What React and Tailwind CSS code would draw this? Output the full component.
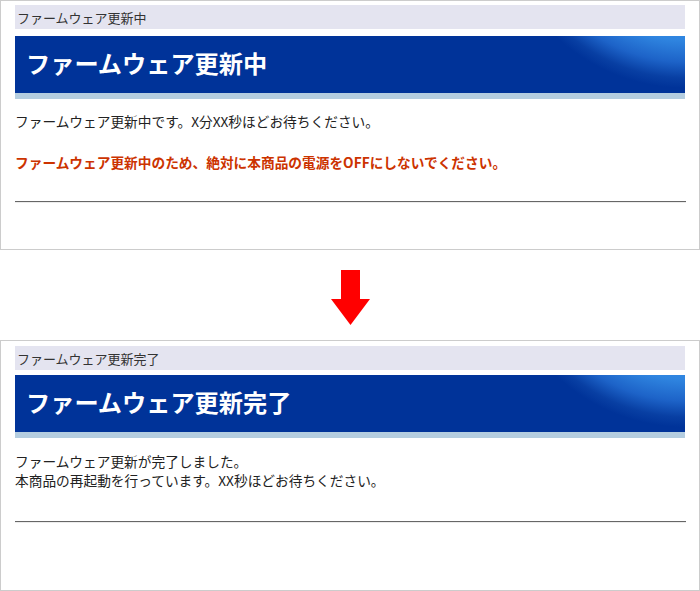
export default function App() {
  const font = "font-['Noto_Sans_CJK_JP','Noto_Sans',sans-serif]";
  const Header = ({ crumb, title, gapClass }) => (
    <>
      <div className="h-[24px] bg-[#e4e4f0] pl-[2px] flex items-center text-[13px] leading-none text-[#333]">
        {crumb}
      </div>
      <div
        className={`${gapClass} h-[57px] flex items-center pl-[11px] pb-[3px] text-white text-[24.2px] font-bold leading-none bg-[#003399] bg-[radial-gradient(circle_at_100%_-136px,#3a92ea_0px,#2f85e0_140px,#1d63c8_162px,#083fa3_178px,#003399_188px)]`}
      >
        {title}
      </div>
      <div className="h-[6px] bg-[#b4cde0]" />
    </>
  );
  const Rule = ({ mt }) => (
    <div className={`${mt} border-t border-[#666] border-b border-b-[#ececec] h-[2px] mr-[-1px]`} />
  );
  return (
    <div className={`${font} w-[700px] h-[591px] bg-white flex flex-col`}>
      <div className="h-[250px] border border-[#cccccc] pt-[4px] px-[14px]">
        <Header crumb="ファームウェア更新中" title="ファームウェア更新中" gapClass="mt-[7px]" />
        <div className="mt-[13px] text-[13.7px] leading-[19px] text-[#222]">
          ファームウェア更新中です。X分XX秒ほどお待ちください。
        </div>
        <div className="mt-[22px] text-[13.7px] leading-[19px] font-bold text-[#cc3300]">
          ファームウェア更新中のため、絶対に本商品の電源をOFFにしないでください。
        </div>
        <Rule mt="mt-[29px]" />
      </div>
      <div className="h-[90px] flex justify-center pt-[20px]">
        <svg width="40" height="56" viewBox="0 0 40 56" className="ml-[1px]">
          <polygon points="10,0 29,0 29,29 39,29 19.5,55 0,29 10,29" fill="#ff0000" />
        </svg>
      </div>
      <div className="h-[251px] border border-[#cccccc] pt-[5px] px-[14px]">
        <Header crumb="ファームウェア更新完了" title="ファームウェア更新完了" gapClass="mt-[5px]" />
        <div className="mt-[14px] text-[13.7px] leading-[19px] text-[#222]">
          <div>ファームウェア更新が完了しました。</div>
          <div>本商品の再起動を行っています。XX秒ほどお待ちください。</div>
        </div>
        <Rule mt="mt-[31px]" />
      </div>
    </div>
  );
}
